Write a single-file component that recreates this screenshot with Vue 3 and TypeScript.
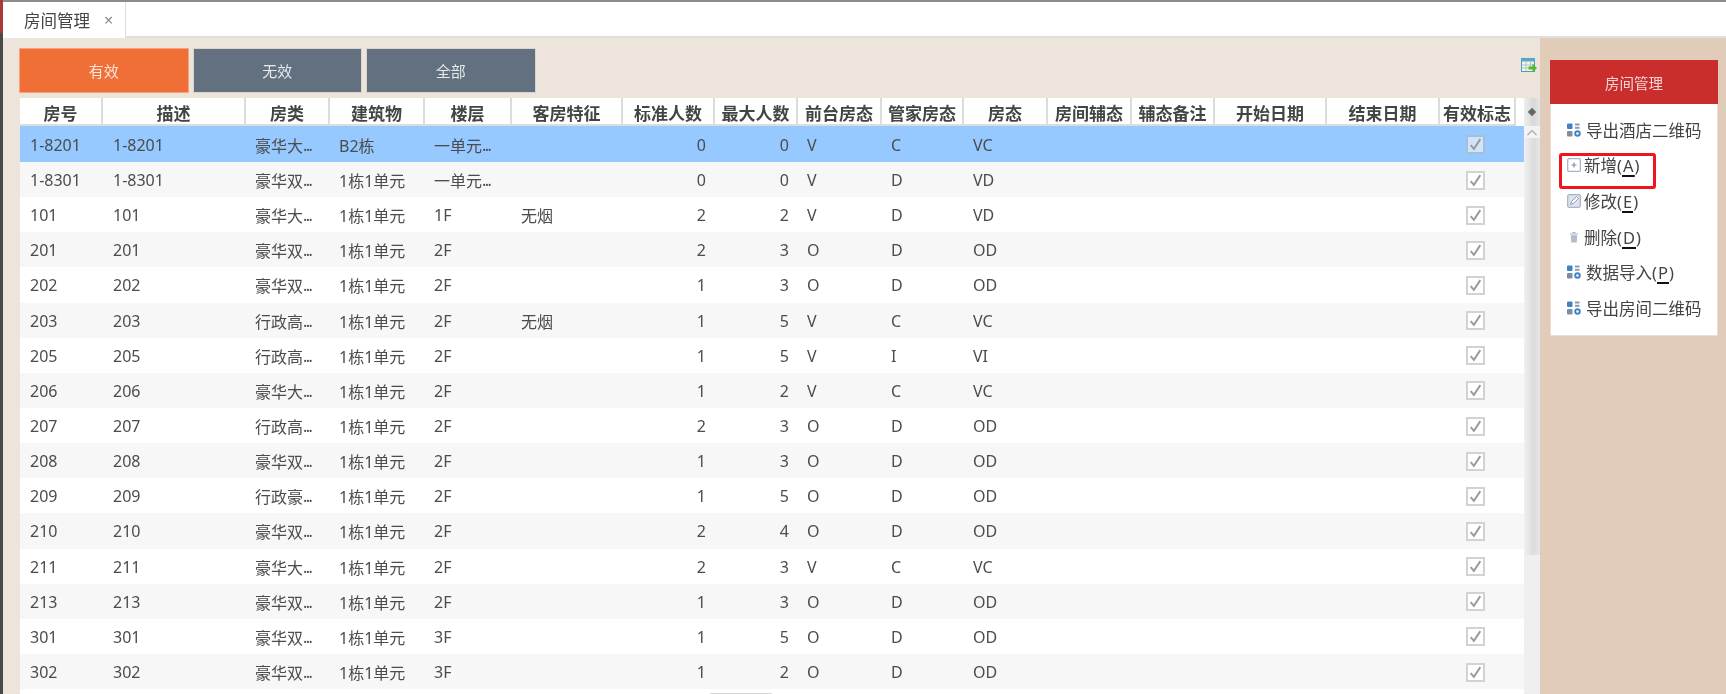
<template>
  <div class="page">
    <div class="edge"></div>
    <div class="window">
      <div class="tabbar">
        <div class="tab">
          <span>房间管理</span>
          <span class="tab-close">×</span>
        </div>
      </div>

      <div class="content">
        <div class="main">
          <div class="toolbar">
            <button
              v-for="(f, i) in filters"
              :key="f"
              class="filter-btn"
              :class="{ active: i === 0 }"
            >
              {{ f }}
            </button>
            <svg class="export-icon" viewBox="0 0 16 15">
              <rect x="0.500" y="0.500" width="13" height="13" fill="#fbf6d0" stroke="#4a9ccb" />
              <rect x="0.500" y="0.500" width="13" height="3" fill="#5aa8d6" />
              <path d="M5 4v9M9.500 4v5M1 7h12M1 10h7" stroke="#9cc9e0" fill="none" />
              <path d="M7.500 8.500h4V5.500l4.500 4.500-4.500 4.500v-3h-4z" fill="#58b62e" />
            </svg>
          </div>

          <div class="table-wrap">
            <div class="table">
              <div class="row head">
                <div v-for="c in columns" :key="c.title" class="cell" :style="{ width: c.width + 'px' }">
                  {{ c.title }}
                </div>
              </div>
              <div
                v-for="(r, i) in rows"
                :key="r[0]"
                class="row"
                :class="{ selected: i === 0, striped: i % 2 === 1 }"
              >
                <div
                  v-for="(v, j) in r"
                  :key="j"
                  class="cell"
                  :class="{ num: j === 6 || j === 7 }"
                  :style="{ width: columns[j].width + 'px' }"
                >
                  <template v-if="v.endsWith('...')">{{ v.slice(0, -3) }}<span class="dots">...</span></template>
                  <template v-else>{{ v }}</template>
                </div>
                <div class="cell" v-for="c in blankColumns" :key="c.title" :style="{ width: c.width + 'px' }"></div>
                <div class="cell check-cell" :style="{ width: '76px' }">
                  <span class="check">
                    <svg viewBox="0 0 14 14"><path d="M2.500 7.500l3 3.500 6-9" fill="none" stroke="#9a9a9a" stroke-width="1.800" /></svg>
                  </span>
                </div>
              </div>
            </div>
            <div class="scrollbar">
              <div class="corner"><span class="diamond"></span></div>
              <div class="arrow">
                <svg viewBox="0 0 12 7"><path d="M1.500 6l4.500-4.500 4.500 4.500" fill="none" stroke="#aaa" stroke-width="1.200" /></svg>
              </div>
              <div class="thumb"></div>
            </div>
            <div class="h-handle"></div>
          </div>
        </div>

        <aside class="side">
          <div class="card">
            <div class="card-title">房间管理</div>
            <ul class="menu">
              <li v-for="m in menu" :key="m.label" class="menu-item" :class="{ marked: m.marked, wide: m.icon === 'grid' }">
                <svg v-if="m.icon === 'grid'" class="icon" viewBox="0 0 14 14">
                  <rect x="0" y="0.500" width="5.500" height="5.500" rx="1" fill="#3f83c4" />
                  <rect x="8" y="0.500" width="4.500" height="2" fill="#8b9bb3" />
                  <rect x="8" y="3.800" width="4.500" height="2" fill="#8b9bb3" />
                  <rect x="0" y="8" width="5.500" height="5.500" rx="1" fill="#7f8da3" />
                  <circle cx="10.500" cy="10.500" r="2.300" fill="none" stroke="#3f83c4" stroke-width="1.900" />
                </svg>
                <svg v-else-if="m.icon === 'plus'" class="icon" viewBox="0 0 14 14">
                  <rect x="0.700" y="0.700" width="12.600" height="12.600" rx="1" fill="none" stroke="#aab3c6" stroke-width="1.300" />
                  <path d="M4.500 7h5M7 4.500v5" stroke="#7f8da8" stroke-width="1.200" />
                </svg>
                <svg v-else-if="m.icon === 'edit'" class="icon" viewBox="0 0 14 14">
                  <rect x="0.700" y="0.700" width="12.600" height="12.600" rx="1.500" fill="#dfe3ec" stroke="#aab3c6" stroke-width="1.300" />
                  <path d="M3.500 10.500l1-3 5-5 2 2-5 5z" fill="#fff" stroke="#8f9ab2" stroke-width="1" />
                </svg>
                <svg v-else class="icon" viewBox="0 0 14 14">
                  <path d="M5.500 2.500h3M3 4h8" stroke="#a6b0c3" stroke-width="1.200" />
                  <path d="M3.800 5.200h6.400l-.5 7.300H4.300z" fill="#b3bccd" />
                </svg>
                <span class="label">{{ m.label }}<template v-if="m.key">(<span class="hotkey">{{ m.key }}</span>)</template></span>
              </li>
            </ul>
          </div>
        </aside>
      </div>
    </div>
  </div>
</template>

<script setup lang="ts">
const filters = ["有效", "无效", "全部"];

const columns = [
  { title: "房号", width: 83 },
  { title: "描述", width: 143 },
  { title: "房类", width: 84 },
  { title: "建筑物", width: 95 },
  { title: "楼层", width: 87 },
  { title: "客房特征", width: 111 },
  { title: "标准人数", width: 92 },
  { title: "最大人数", width: 83 },
  { title: "前台房态", width: 84 },
  { title: "管家房态", width: 82 },
  { title: "房态", width: 84 },
  { title: "房间辅态", width: 84 },
  { title: "辅态备注", width: 83 },
  { title: "开始日期", width: 112 },
  { title: "结束日期", width: 113 },
  { title: "有效标志", width: 76 },
];

const blankColumns = columns.slice(11, 15);

const rows = [
  ["1-8201", "1-8201", "豪华大...", "B2栋", "一单元...", "", "0", "0", "V", "C", "VC"],
  ["1-8301", "1-8301", "豪华双...", "1栋1单元", "一单元...", "", "0", "0", "V", "D", "VD"],
  ["101", "101", "豪华大...", "1栋1单元", "1F", "无烟", "2", "2", "V", "D", "VD"],
  ["201", "201", "豪华双...", "1栋1单元", "2F", "", "2", "3", "O", "D", "OD"],
  ["202", "202", "豪华双...", "1栋1单元", "2F", "", "1", "3", "O", "D", "OD"],
  ["203", "203", "行政高...", "1栋1单元", "2F", "无烟", "1", "5", "V", "C", "VC"],
  ["205", "205", "行政高...", "1栋1单元", "2F", "", "1", "5", "V", "I", "VI"],
  ["206", "206", "豪华大...", "1栋1单元", "2F", "", "1", "2", "V", "C", "VC"],
  ["207", "207", "行政高...", "1栋1单元", "2F", "", "2", "3", "O", "D", "OD"],
  ["208", "208", "豪华双...", "1栋1单元", "2F", "", "1", "3", "O", "D", "OD"],
  ["209", "209", "行政豪...", "1栋1单元", "2F", "", "1", "5", "O", "D", "OD"],
  ["210", "210", "豪华双...", "1栋1单元", "2F", "", "2", "4", "O", "D", "OD"],
  ["211", "211", "豪华大...", "1栋1单元", "2F", "", "2", "3", "V", "C", "VC"],
  ["213", "213", "豪华双...", "1栋1单元", "2F", "", "1", "3", "O", "D", "OD"],
  ["301", "301", "豪华双...", "1栋1单元", "3F", "", "1", "5", "O", "D", "OD"],
  ["302", "302", "豪华双...", "1栋1单元", "3F", "", "1", "2", "O", "D", "OD"],
];

const menu = [
  { label: "导出酒店二维码", icon: "grid" },
  { label: "新增", key: "A", icon: "plus", marked: true },
  { label: "修改", key: "E", icon: "edit" },
  { label: "删除", key: "D", icon: "trash" },
  { label: "数据导入", key: "P", icon: "grid" },
  { label: "导出房间二维码", icon: "grid" },
];
</script>

<style>
html,
body {
  margin: 0;
  overflow: hidden;
}
</style>

<style scoped>
.page {
  display: flex;
  width: 1726px;
  height: 694px;
  overflow: hidden;
  font-family: "Noto Sans", "Noto Sans CJK SC", sans-serif;
  color: #4c4c4c;
  filter: blur(0.4px);
}

.edge {
  width: 3px;
  flex: none;
  background: linear-gradient(180deg, #a83a3a 0, #a83a3a 32px, #4a4a4a 34px);
}

.window {
  flex: 1;
  min-width: 0;
  display: flex;
  flex-direction: column;
  border-top: 2px solid #8c8c8c;
}

.tabbar {
  height: 34px;
  flex: none;
  background: #fff;
  border-bottom: 2px solid #dedede;
}

.tab {
  width: 123px;
  height: 36px;
  box-sizing: border-box;
  display: flex;
  align-items: center;
  padding-left: 21px;
  gap: 14px;
  background: #fff;
  border-right: 1px solid #dedede;
  font-size: 16.500px;
  color: #444;
}

.tab-close {
  font-size: 16px;
  color: #888;
}

.content {
  flex: 1;
  min-height: 0;
  display: flex;
}

.main {
  flex: 1;
  min-width: 0;
  background: #ede5dc;
  padding: 10px 0 0 16px;
  display: flex;
  flex-direction: column;
  gap: 5px;
}

.toolbar {
  display: flex;
  gap: 4px;
  height: 45px;
  flex: none;
}

.filter-btn {
  width: 169.500px;
  border: 1px solid #d9d4cd;
  border-radius: 1px;
  background: #62707f;
  color: #e6e9ec;
  font: inherit;
  font-size: 15px;
}

.filter-btn.active {
  background: #ef6f37;
  border-color: #f4a27c;
  color: #fbe6db;
}

.export-icon {
  width: 16px;
  height: 15px;
  margin: 10px 3px 0 auto;
}

.table-wrap {
  flex: 1;
  min-height: 0;
  display: flex;
  position: relative;
  margin-left: 1px;
}

.table {
  flex: 1;
  min-width: 0;
  background: #fff;
}

.row {
  display: flex;
  height: 35.150px;
  font-size: 16px;
}

.row.striped {
  background: #f7f7f7;
}

.row.selected {
  height: 36px;
  background: #95c9ff;
}

.row.head {
  height: 28px;
  background: #fff;
  font-weight: 700;
  font-size: 17px;
  color: #444;
}

.cell {
  flex: none;
  box-sizing: border-box;
  padding: 1px 9px 0 9px;
  display: flex;
  align-items: center;
  white-space: nowrap;
}

.cell:nth-child(-n + 2) {
  padding-left: 10px;
}

.dots {
  letter-spacing: -1.500px;
}

.head .cell {
  justify-content: center;
  padding: 2px 0 0;
  border-right: 2px solid #dcdcdc;
  border-bottom: 2px solid #dcdcdc;
}

.cell.num {
  justify-content: flex-end;
}

.check-cell {
  justify-content: center;
  padding: 1px 6px 0 0;
}

.check {
  width: 19px;
  height: 19px;
  box-sizing: border-box;
  border: 2px solid #d2d2d2;
  background: #fff;
  display: flex;
}

.selected .check {
  background: #cfe5fb;
  border-color: #a9bed3;
}

.check svg {
  width: 100%;
  height: 100%;
}

.scrollbar {
  width: 16px;
  flex: none;
  display: flex;
  flex-direction: column;
  background: #efefef;
}

.corner {
  height: 28px;
  flex: none;
  display: flex;
  align-items: center;
  justify-content: center;
  background: linear-gradient(90deg, #eee, #d8d8d8 60%, #e6e6e6);
}

.diamond {
  width: 6px;
  height: 6px;
  background: #666;
  transform: rotate(45deg);
}

.arrow {
  height: 12px;
  flex: none;
  display: flex;
  align-items: center;
  justify-content: center;
  background: #f3f3f3;
}

.arrow svg {
  width: 12px;
  height: 7px;
}

.thumb {
  height: 417px;
  flex: none;
  background: linear-gradient(90deg, #f0f0f0, #dcdcdc 60%, #e6e6e6);
}

.h-handle {
  position: absolute;
  left: 690px;
  bottom: 0;
  width: 62px;
  height: 1px;
  background: #d8d8d8;
}

.side {
  width: 186px;
  flex: none;
  box-sizing: border-box;
  background: #e0ccb9;
  padding: 22px 8px 0 10px;
}

.card {
  background: #fff;
  border: 1px solid #eadfd4;
  height: 276px;
  box-sizing: border-box;
}

.card-title {
  height: 44px;
  margin: -1px -1px 0;
  display: flex;
  align-items: center;
  justify-content: center;
  background: #c92e2c;
  color: #f6d5d4;
  font-size: 14.500px;
}

.menu {
  list-style: none;
  margin: 0;
  padding: 8px 0 0 16px;
  font-size: 16.500px;
  color: #444;
}

.menu-item {
  height: 35.600px;
  display: flex;
  align-items: center;
  gap: 3px;
  position: relative;
}

.menu-item.wide {
  gap: 5px;
}

.menu-item.marked::after {
  content: "";
  position: absolute;
  left: -8px;
  top: 5px;
  width: 97px;
  height: 36px;
  box-sizing: border-box;
  border: 3px solid #f0141e;
  border-radius: 3px;
}

.icon {
  width: 14px;
  height: 14px;
  flex: none;
}

.hotkey {
  padding: 0 1px;
  background: linear-gradient(#111, #111) no-repeat bottom / 100% 2px;
}
</style>
